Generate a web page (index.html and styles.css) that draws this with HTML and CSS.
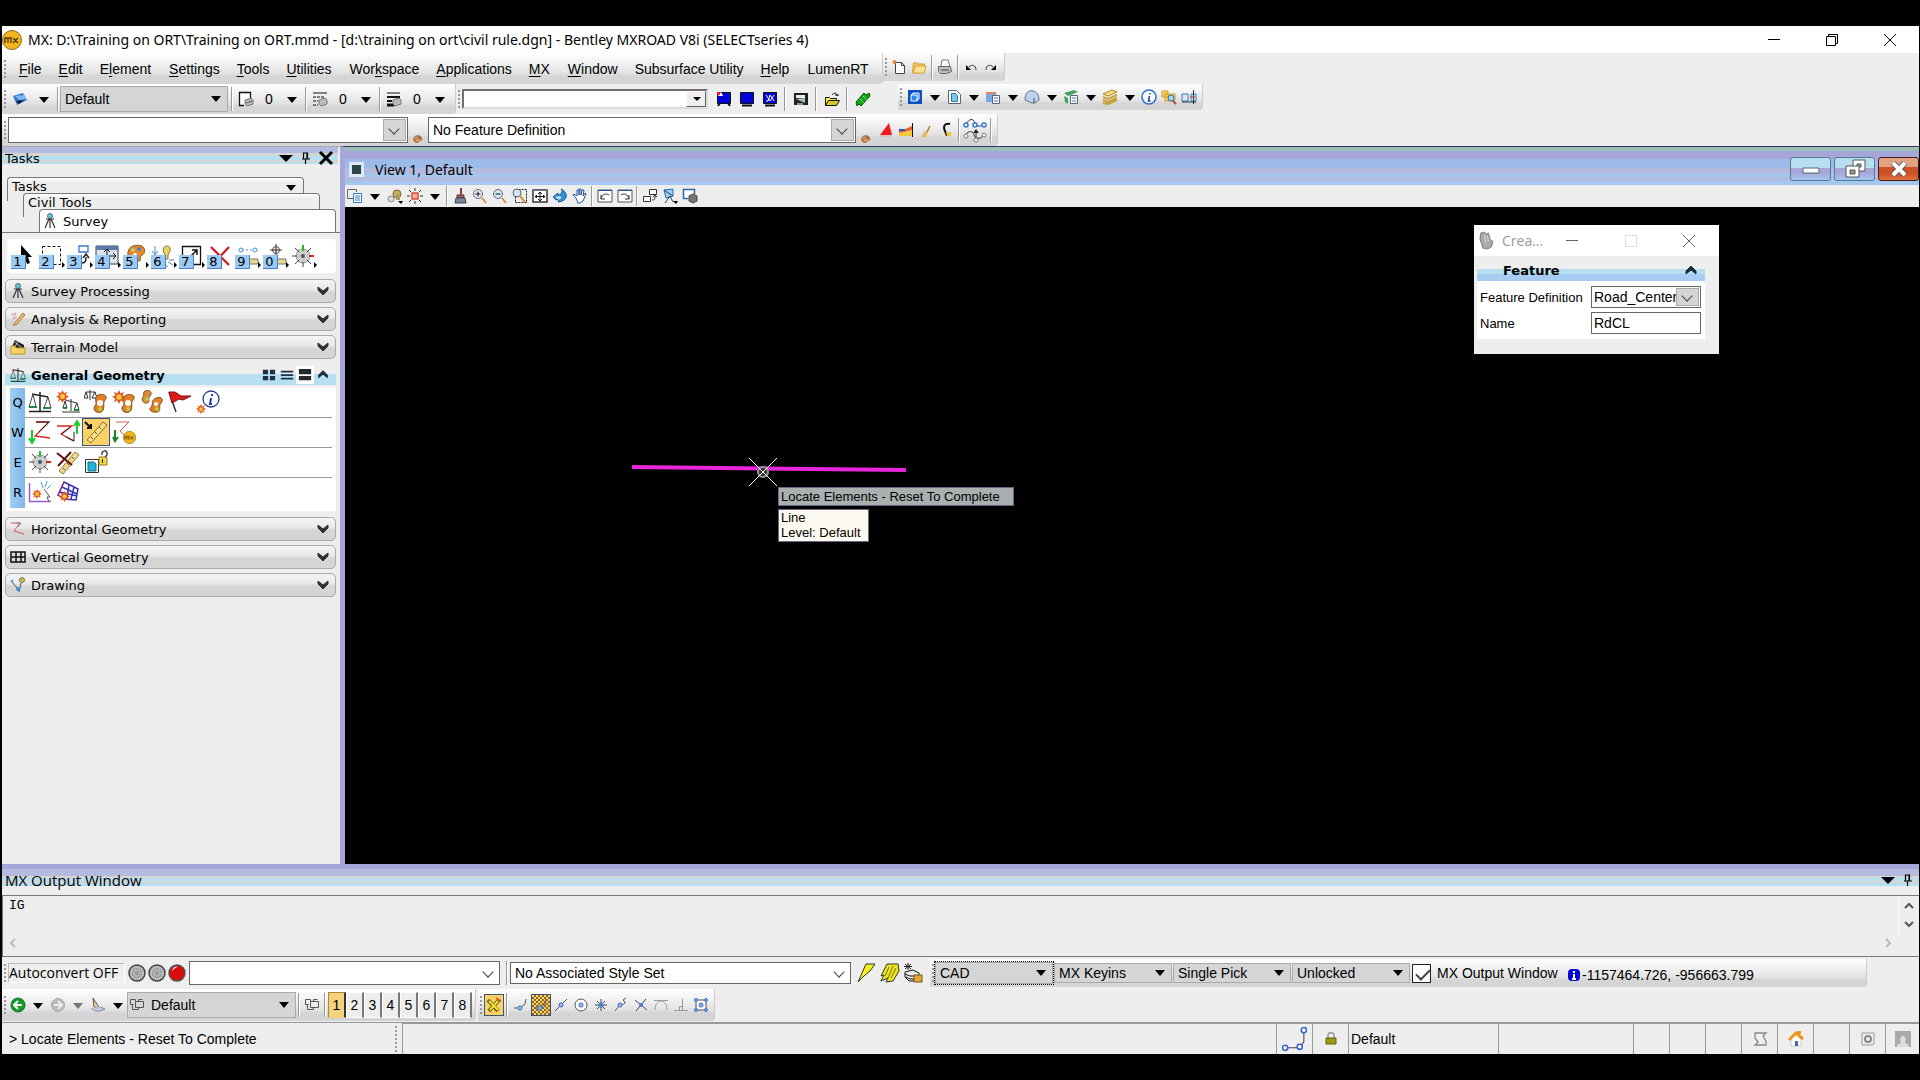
FILE: index.html
```html
<!DOCTYPE html>
<html lang="en">
<head>
  <meta charset="utf-8">
  <title>Bentley MXROAD V8i</title>
  <link rel="stylesheet" href="styles.css">
</head>
<body>
  <!-- icon library -->
  <svg class="library" aria-hidden="true">
    <symbol id="tri" viewBox="0 0 16 16"><path d="M3 6h10l-5 6z" fill="currentColor"/></symbol>
    <symbol id="bigtri" viewBox="0 0 16 16"><path d="M1 5h14l-7 7z" fill="currentColor"/></symbol>
    <symbol id="pin" viewBox="0 0 16 16"><path d="M5.500 9V3h4v6M9 3v6M4 9h8M7.500 9v5" fill="none" stroke="#000" stroke-width="1.200"/></symbol>
    <symbol id="cross" viewBox="0 0 16 16"><path d="M2 2l12 12M14 2L2 14" stroke="#000" stroke-width="3"/></symbol>
    <symbol id="thincross" viewBox="0 0 16 16"><path d="M2 2l12 12M14 2L2 14" stroke="currentColor"/></symbol>
    <symbol id="dash" viewBox="0 0 16 16"><path d="M2 7.500h12" stroke="currentColor"/></symbol>
    <symbol id="box" viewBox="0 0 16 16"><path d="M2.500 2.500h11v11h-11z" fill="none" stroke="currentColor"/></symbol>
    <symbol id="restore" viewBox="0 0 16 16"><path d="M2.500 4.500h9v9h-9zM4.500 4.500v-2h9v9h-2" fill="none" stroke="currentColor"/></symbol>
    <symbol id="down" viewBox="0 0 16 16"><path d="M3 4l5 4 5-4v3l-5 5-5-5z" fill="#333" stroke="#333"/></symbol>
    <symbol id="up" viewBox="0 0 16 16"><path d="M3 11l5-4 5 4V8L8 3 3 8z" fill="#1b2b40" stroke="#1b2b40"/></symbol>
    <symbol id="chev" viewBox="0 0 16 16"><path d="M4 6l4 4 4-4" fill="none" stroke="currentColor" stroke-width="2"/></symbol>
    <symbol id="mx" viewBox="0 0 20 20"><circle cx="10" cy="10" r="9.500" fill="#f3b41c" stroke="#8a6a12"/><path d="M3 13V8h2l1 1v4M6 9l1-1h2v5M11 8l5 5M16 8l-5 5" fill="none" stroke="#4a3905" stroke-width="1.300"/></symbol>
    <symbol id="doc" viewBox="0 0 16 16"><path d="M4.500 3.500h6l3 3v8h-9z" fill="#fff" stroke="#444"/><path d="M10.500 3.500v3h3" fill="none" stroke="#444"/><circle cx="3.500" cy="3" r="2" fill="#e48a3a"/></symbol>
    <symbol id="folder" viewBox="0 0 16 16"><path d="M1.500 14l1-10h4l1 1h6v9z" fill="#f3c258" stroke="#d69d36"/><path d="M2 14l3-7h10l-2 7z" fill="#ffe294" stroke="#dba943"/></symbol>
    <symbol id="print" viewBox="0 0 16 16"><path d="M4 7l1-6h6l2 7" fill="#fff" stroke="#777"/><path d="M1.500 7.500h12l1 5-5 2h-6l-2-2z" fill="#b9bfc2" stroke="#666"/><path d="M4 11h8" stroke="#444"/></symbol>
    <symbol id="undo" viewBox="0 0 16 16"><path d="M6 8c3-3 7-2 7 3" fill="none" stroke="#333"/><path d="M3 6v5h5z"/></symbol>
    <symbol id="redo" viewBox="0 0 16 16"><path d="M10 8C7 5 3 6 3 11" fill="none" stroke="#333"/><path d="M13 6v5H8z"/></symbol>
    <symbol id="attr" viewBox="0 0 16 16"><path d="M1 5l10-3 4 7-10 5z" fill="#2d7ad6"/><path d="M3 5l9-1 2 4-7 1z" fill="#7fb9f2"/><path d="M4 10l8-1-5 4z" fill="#111"/></symbol>
    <symbol id="level" viewBox="0 0 16 16"><path d="M12.500 7V1.500h-11v13H6" fill="#fff" stroke="#111" stroke-width="1.300"/><path d="M7 9l6-2 2 2v4l-6 2-2-2z" fill="#bbb" stroke="#777"/><path d="M8 12l6-2" stroke="#555"/></symbol>
    <symbol id="style" viewBox="0 0 16 16"><path d="M1 2h14" stroke="#111"/><path d="M1 6h12M1 10h5M1 14h5" stroke="#111" stroke-dasharray="3 1"/><path d="M7 9l6-2 2 2v4l-6 2-2-2z" fill="#bbb" stroke="#777"/></symbol>
    <symbol id="weight" viewBox="0 0 16 16"><path d="M1 2h13" stroke="#111"/><path d="M1 6h13M1 10h5" stroke="#111" stroke-width="2"/><path d="M1 14h7" stroke="#111" stroke-width="3"/><path d="M7 9l6-2 2 2v4l-6 2-2-2z" fill="#bbb" stroke="#777"/></symbol>
    <symbol id="screen1" viewBox="0 0 16 16"><path d="M1.500 1.500h13v11h-13z" fill="#0404d8" stroke="#111"/><path d="M4 12l-2 3M12 12l2 3" stroke="#111" stroke-width="2"/><path d="M2 5l3-4 2 4z" fill="#fff"/><path d="M1 1h3v3H1z" fill="#e22"/></symbol>
    <symbol id="screen2" viewBox="0 0 16 16"><path d="M1.500 1.500h13v11h-13z" fill="#0404d8" stroke="#111"/><path d="M3 14.500h10" stroke="#111" stroke-width="2"/></symbol>
    <symbol id="screen3" viewBox="0 0 16 16"><path d="M1.500 1.500h13v11h-13z" fill="#0404d8" stroke="#111"/><path d="M4 4l4 6 4-6M4 10h2l2-6 4 6" fill="none" stroke="#fff"/><path d="M3 14.500h10" stroke="#111" stroke-width="2"/></symbol>
    <symbol id="display" viewBox="0 0 16 16"><path d="M1 2h14v12H1z" fill="#222"/><path d="M3 4h9v3H3z" fill="#e8efef"/><path d="M3 8l9 4V7z" fill="#a5c5b6"/><path d="M4 13h6" stroke="#fff"/></symbol>
    <symbol id="openyellow" viewBox="0 0 16 16"><path d="M1.500 14.500v-8h4l1 1h6v3" fill="#ffef3d" stroke="#111"/><path d="M1.500 14.500l3-5h11l-3 5z" fill="#d9c72d" stroke="#111"/><path d="M8 4c2-3 5-2 5 1M11 4h4" fill="none" stroke="#111"/></symbol>
    <symbol id="tags" viewBox="0 0 16 16"><path d="M1 11l8-9 2 2 3-2 1 3-9 10-2-2-2 2z" fill="#10a818" stroke="#05510a"/><path d="M5 8l4 4M8 5l4 4" stroke="#eee" stroke-dasharray="1 1"/></symbol>
    <symbol id="model" viewBox="0 0 16 16"><path d="M1 1h14v14H1z" fill="#0b4fc4"/><path d="M4 6h6v6H4zM4 6l2-2h6v6l-2 2" fill="#2e83ef" stroke="#fff"/></symbol>
    <symbol id="page" viewBox="0 0 16 16"><path d="M2.500 1.500h8l4 4v9h-12z" fill="#fff" stroke="#567"/><path d="M5.500 4.500h4l2 2v6h-6z" fill="#7cc6e8" stroke="#379"/></symbol>
    <symbol id="refs" viewBox="0 0 16 16"><path d="M1 3h10v10H1z" fill="#7da9dc"/><path d="M1 3h10v2H1z" fill="#d88e55"/><path d="M7.500 6.500h7v8h-7z" fill="#fff" stroke="#567"/><path d="M9 9h4M9 12h4" stroke="#467bc0"/></symbol>
    <symbol id="dome" viewBox="0 0 16 16"><path d="M1 11C1 3 5 1 9 2s6 4 6 9l-4 3H8z" fill="#bed2ef" stroke="#607390"/><path d="M10 9v5" stroke="#444"/></symbol>
    <symbol id="levels2" viewBox="0 0 16 16"><path d="M1 4l10-3 4 2-10 4zM1 7l4 2v6l-3-2z" fill="#43a060"/><path d="M7.500 6.500h7v8h-7z" fill="#fff" stroke="#567"/><path d="M9 9h4M9 12h4" stroke="#467bc0"/></symbol>
    <symbol id="stack" viewBox="0 0 16 16"><path d="M1 5l9-4 5 2-9 4z" fill="#f7db7e" stroke="#a78a2d"/><path d="M1 8l5 2 9-4M1 11l5 2 9-4M1 14l5 1 9-4" fill="none" stroke="#c9a23d" stroke-width="2"/></symbol>
    <symbol id="info" viewBox="0 0 16 16"><circle cx="8" cy="8" r="7" fill="#fff" stroke="#2c6fcb" stroke-width="1.500"/><path d="M9 4v1.500M8.500 7l-1 5h2" stroke="#153f9f" fill="none" stroke-width="1.500"/></symbol>
    <symbol id="find" viewBox="0 0 16 16"><path d="M1 2h6v6H1zM4 5h10v7H4z" fill="#f6ca5b" stroke="#d7a130"/><circle cx="10" cy="9" r="3" fill="#a7d5f2" stroke="#27a"/><path d="M12 12l3 3" stroke="#a53" stroke-width="2"/></symbol>
    <symbol id="draw" viewBox="0 0 16 16"><path d="M1 12V5h6v7zM10 12V5h5v7z" fill="#dde8f2" stroke="#3878b4"/><path d="M12.500 1v14M1 13h14" stroke="#234"/><path d="M9 8h5" stroke="#c33"/></symbol>
    <symbol id="palette" viewBox="0 0 16 16"><path d="M1 10c0-5 5-7 10-5 4 2 4 7 1 7s-2 3-5 3-6-1-6-5z" fill="#db7a28" stroke="#865224"/><circle cx="5" cy="8" r="1.500" fill="#5cc8d8"/><circle cx="10" cy="7" r="1.500" fill="#5164d8"/><path d="M6 12h4" stroke="#fff"/></symbol>
    <symbol id="palettes" viewBox="0 0 24 24"><path d="M5 1c5-2 8 2 5 5s1 6-3 7-6-4-4-6-1-4 2-6z" fill="#dc8b37" stroke="#80501d"/><path d="M16 8c6-2 8 2 5 5s1 8-4 9-9-2-6-5-1-6 5-9z" fill="#e38027" stroke="#80501d"/><circle cx="16" cy="14" r="2" fill="#fff"/><circle cx="7" cy="9" r="2" fill="#b3cc5c"/><circle cx="17" cy="19" r="2" fill="#c0cf3e"/></symbol>
    <symbol id="scalepal" viewBox="0 0 24 24"><path d="M2 2h9M6 0v10M2 2L0 8h4zM11 2L8 8h5z" fill="none" stroke="#333"/><path d="M14 5c7-2 10 2 7 5s1 10-4 12-9-3-6-6-2-8 3-11z" fill="#e38027" stroke="#80501d"/><circle cx="16" cy="13" r="3" fill="#fff"/><circle cx="16" cy="19" r="2" fill="#c0cf3e"/></symbol>
    <symbol id="starpal" viewBox="0 0 24 24"><path d="M14 5c7-2 10 2 7 5s1 10-4 12-9-3-6-6-2-8 3-11z" fill="#e38027" stroke="#80501d"/><circle cx="16" cy="13" r="3" fill="#fff"/><circle cx="16" cy="19" r="2" fill="#c0cf3e"/><use href="#star" width="14" height="14"/></symbol>
    <symbol id="star" viewBox="0 0 16 16"><path d="M8 0l2 4 4-2-2 4 4 2-4 2 2 4-4-2-2 4-2-4-4 2 2-4-4-2 4-2-2-4 4 2z" fill="#e5541e"/><circle cx="8" cy="8" r="3" fill="#ffcf3d"/></symbol>
    <symbol id="redwedge" viewBox="0 0 16 16"><path d="M11 1l3 12H2z" fill="#ee1d1d"/><path d="M2 13h12v2H2z" fill="#d5c8bb"/></symbol>
    <symbol id="wedge" viewBox="0 0 16 16"><path d="M1 8l6-1 7-3v9H1z" fill="#e8632b"/><path d="M1 11l13-3v6H1z" fill="#f4c940"/><path d="M1 8h6" stroke="#2951d4" stroke-width="2"/><path d="M14.500 1v14" stroke="#111"/></symbol>
    <symbol id="brush" viewBox="0 0 16 16"><path d="M12 4l-3 6" stroke="#b5772c" stroke-width="1.500"/><path d="M3 15l4-6 3 1-2 5z" fill="#eab95b"/></symbol>
    <symbol id="hook" viewBox="0 0 16 16"><path d="M12 2C6 1 5 5 7 9l2 5" fill="none" stroke="#111" stroke-width="2"/><path d="M8 10h5v4H9z" fill="#f0c62a"/></symbol>
    <symbol id="network" viewBox="0 0 24 24"><path d="M2 6c5-7 8-7 10-2s6 3 9 1M2 16c4-5 8-4 9 0s6 5 10 0M13 19v-6" fill="none" stroke="#333"/><path d="M10 14l3-4 3 4z" fill="#222"/><g fill="#fff" stroke="#3676d6" stroke-width="1.500"><circle cx="3" cy="6" r="2"/><circle cx="12" cy="6" r="2"/><circle cx="21" cy="6" r="2"/></g><g fill="#fff" stroke="#777"><circle cx="3" cy="17" r="2"/><circle cx="13" cy="21" r="2"/><circle cx="21" cy="16" r="2"/></g></symbol>
    <symbol id="survey" viewBox="0 0 16 16"><circle cx="8" cy="3" r="2.500" fill="#67c6cf" stroke="#478"/><path d="M8 6v9M7 6L3 15M9 6l4 9M4 6h8" fill="none" stroke="#333" stroke-width="1.200"/></symbol>
    <symbol id="pencil" viewBox="0 0 16 16"><path d="M1 4l5-2-3 6 4-2" fill="none" stroke="#d99"/><path d="M3 14L13 2l2 2L6 14z" fill="#e8ba72" stroke="#a87a3a"/></symbol>
    <symbol id="terrain" viewBox="0 0 16 16"><path d="M2 8L5 1l9 5v5z" fill="#222"/><path d="M5 3l7 6M8 2L5 8" stroke="#bbb"/><path d="M1 7h4l1 2h9v6H1z" fill="#f5d263" stroke="#c19628"/></symbol>
    <symbol id="scales" viewBox="0 0 24 24"><path d="M4 4l16 3M12 2v19M1 21.500h22" fill="none" stroke="#222" stroke-width="1.500"/><path d="M5 4L1 17h7zM20 7l-4 11h7z" fill="none" stroke="#444"/><path d="M1 17h8M15 18h8" stroke="#25834b" stroke-width="2"/></symbol>
    <symbol id="starscales" viewBox="0 0 24 24"><path d="M9 10l12 3M15 9v12M6 22h18M9 11l-2 7h4zM21 13l-3 7h5z" fill="none" stroke="#333"/><path d="M7 18h4M18 20h5" stroke="#238343" stroke-width="2"/><use href="#star" width="13" height="13"/></symbol>
    <symbol id="flag" viewBox="0 0 24 24"><path d="M1 2l7 20" stroke="#333" stroke-width="1.500"/><path d="M1 2h6l6 4h10l-8 4-4-1-7 4z" fill="#e21919" stroke="#801010"/></symbol>
    <symbol id="starinfo" viewBox="0 0 24 24"><circle cx="15" cy="9" r="8" fill="#fff" stroke="#27408b" stroke-width="1.300"/><path d="M16 4v2M15 8l-1 6h2" fill="none" stroke="#213baa" stroke-width="2"/><use href="#star" y="14" width="10" height="10"/></symbol>
    <symbol id="zdown" viewBox="0 0 24 24"><path d="M8 2h13L7 16l15 2" fill="none" stroke="#d22" stroke-width="1.300"/><path d="M8 2h13L11 12" fill="none" stroke="#222"/><path d="M4 10v11M1 18l3 5 3-5" fill="none" stroke="#18cc2c" stroke-width="2"/></symbol>
    <symbol id="zup" viewBox="0 0 24 24"><path d="M1 6h15L5 14l13 7" fill="none" stroke="#d22" stroke-width="1.300"/><path d="M14 7L6 14M10 17l8 4v-9" fill="none" stroke="#222"/><path d="M21 14V2M18 6l3-5 3 5" fill="none" stroke="#18cc2c" stroke-width="2"/></symbol>
    <symbol id="ruler" viewBox="0 0 24 24"><path d="M3 20L19 2l4 3L7 23z" fill="#f6df87" stroke="#8a7324"/><path d="M7 17l2 2M11 12l2 2M15 7l2 2" stroke="#555"/><path d="M1 2l6 6M7 4v4H3" fill="none" stroke="#111" stroke-width="2"/></symbol>
    <symbol id="zmx" viewBox="0 0 24 24"><path d="M4 2h13L8 11l4 4" fill="none" stroke="#d55"/><path d="M3 10v10M1 17l2 4 3-4" fill="none" stroke="#16801f" stroke-width="2"/><use href="#mx" x="11" y="11" width="13" height="13"/></symbol>
    <symbol id="target" viewBox="0 0 24 24"><circle cx="12" cy="12" r="7" fill="#ccc" stroke="#999"/><path d="M12 1v5M12 18v5M1 12h5M18 12h5M4 4l4 4M20 4l-4 4M4 20l4-4M20 20l-4-4" stroke="#444"/><path d="M12 1v6" stroke="#1bbb2c" stroke-width="2"/><path d="M18 12h5" stroke="#d22" stroke-width="2"/><circle cx="12" cy="12" r="2" fill="#456"/></symbol>
    <symbol id="rulerx" viewBox="0 0 24 24"><path d="M3 21L19 2l4 3L7 24z" fill="#efd68b" stroke="#9a803a"/><path d="M7 18l2 2M11 13l2 2M16 7l2 2" stroke="#555"/><path d="M1 3l15 12M15 2L2 16" stroke="#611" stroke-width="2"/></symbol>
    <symbol id="unlock" viewBox="0 0 24 24"><path d="M1.500 9.500h13v13h-13z" fill="#fff" stroke="#333"/><path d="M4 12h6l2 2v7H4z" fill="#19b7d8" stroke="#268"/><path d="M15 7h8v8h-8z" fill="#efd94d" stroke="#8d7d20"/><path d="M18 5c-1-5 6-6 5 0l-2 2" fill="none" stroke="#444" stroke-width="1.500"/><path d="M18.500 9v4" stroke="#222"/></symbol>
    <symbol id="chartpick" viewBox="0 0 24 24"><path d="M1.500 3v18.500H23" fill="none" stroke="#9b59d0" stroke-width="1.500"/><path d="M13 2l2 6M19 1l-2 6M23 5l-4 4" stroke="#46a3e0"/><path d="M16 9l6 8h-3l2 5" fill="#fff" stroke="#556"/><use href="#star" x="4" y="9" width="10" height="10"/></symbol>
    <symbol id="mesh" viewBox="0 0 24 24"><path d="M8 2l14 7-2 11-12-1-6-4zM6 7l15 7M4 12l17 4M13 4l-2 15M18 7l-3 12" fill="none" stroke="#3830b8" stroke-width="1.500"/><path d="M8 2L2 16" stroke="#b42d75"/><use href="#star" x="3" y="11" width="11" height="11"/></symbol>
    <symbol id="horiz" viewBox="0 0 16 16"><path d="M1 2h9L4 10l10 3" fill="none" stroke="#d55"/><path d="M6 2h5L8 6" fill="none" stroke="#888"/></symbol>
    <symbol id="gridv" viewBox="0 0 16 16"><path d="M1 3h14v10H1zM1 8h14M6 3v10M11 3v10" fill="#ddd" stroke="#111" stroke-width="1.500"/></symbol>
    <symbol id="drawing" viewBox="0 0 16 16"><path d="M1 4l8 9M11 6l-2 9" fill="none" stroke="#357"/><circle cx="2" cy="4" r="1.500" fill="#6ad"/><circle cx="8" cy="12" r="2" fill="#468bd4"/><circle cx="12" cy="3" r="2.500" fill="#d6bf36" stroke="#777"/></symbol>
    <symbol id="tiles" viewBox="0 0 16 16"><path d="M1 2h6v5H1zM9 2h6v5H9zM1 9h6v5H1zM9 9h6v5H9z" fill="#1d3047"/></symbol>
    <symbol id="lines" viewBox="0 0 16 16"><path d="M1 4h14M1 8h14M1 12h14" stroke="#1d3047" stroke-width="2"/></symbol>
    <symbol id="panels" viewBox="0 0 16 16"><path d="M1 1h14v6H1zM1 9h14v5H1z" fill="#222b2b"/></symbol>
    <symbol id="cursor" viewBox="0 0 24 24"><path d="M10 1v16l4-3 2 6 3-1-2-6h4z" fill="#000"/></symbol>
    <symbol id="fence" viewBox="0 0 24 24"><path d="M3.500 2.500h18v18h-18z" fill="none" stroke="#111" stroke-dasharray="3 2"/></symbol>
    <symbol id="manip" viewBox="0 0 24 24"><path d="M12 2h9v6h-9z" fill="#fff" stroke="#3878cb" stroke-width="1.300"/><path d="M15 19c4 0 4-3 4-6M16 14l3-4 3 4" fill="none" stroke="#222" stroke-width="1.500"/></symbol>
    <symbol id="stretch" viewBox="0 0 24 24"><path d="M1 2h22v18H1z" fill="#dce4ee" stroke="#345"/><path d="M1 2h22v4H1z" fill="#5c7baa"/><path d="M12 5v13M4 12h17M9 8l3-3 3 3M18 9l3 3-3 3" fill="none" stroke="#111"/></symbol>
    <symbol id="colors" viewBox="0 0 24 24"><path d="M5 8c1-6 8-8 14-6 4 3 3 8 0 9s0 6-3 6-2-3-5-3-7-1-6-6z" fill="#e08a2b" stroke="#8d5a1c"/><circle cx="10" cy="6" r="2" fill="#b8cf55"/><circle cx="16" cy="5" r="2" fill="#5875d0"/><circle cx="12" cy="11" r="2" fill="#fff"/></symbol>
    <symbol id="bulb" viewBox="0 0 24 24"><path d="M4 2v8M1 7l3 4 3-4" fill="none" stroke="#478cc8"/><path d="M13 9c-4-8 8-10 6-2l-2 4v4h-3v-4z" fill="#ebd267" stroke="#8f7b28"/><path d="M17 18l5 3M18 16h5M13 20l4 3" stroke="#58a"/></symbol>
    <symbol id="scale" viewBox="0 0 24 24"><path d="M3.500 2.500h18v18h-18z" fill="#fff" stroke="#111" stroke-width="1.300"/><path d="M10 14l8-8M13 6h5v5" fill="none" stroke="#111" stroke-width="1.500"/><path d="M4 12h8v8" fill="none" stroke="#111" stroke-dasharray="2 2"/></symbol>
    <symbol id="delete" viewBox="0 0 24 24"><path d="M4 3l18 18M22 3L8 18" fill="none" stroke="#d81818" stroke-width="2.200"/></symbol>
    <symbol id="measure" viewBox="0 0 24 24"><path d="M7 6h12" stroke="#478bd0" stroke-dasharray="2 2"/><circle cx="6" cy="6" r="2" fill="#fff" stroke="#478bd0"/><circle cx="20" cy="6" r="2" fill="#fff" stroke="#478bd0"/><path d="M13 15h10v5H13z" fill="#ead88a" stroke="#777"/></symbol>
    <symbol id="locate" viewBox="0 0 24 24"><circle cx="13" cy="6" r="3.500" fill="#eee" stroke="#555"/><path d="M13 0v12M7 6h12" stroke="#333"/><path d="M13 15h10v5H13z" fill="#ead88a" stroke="#777"/></symbol>
    <symbol id="vlist" viewBox="0 0 16 16"><path d="M9.500 4V1.500h-9v9H6" fill="none" stroke="#666"/><path d="M6.500 5.500h8v9h-8z" fill="#fff" stroke="#357cc0"/><path d="M8 8h5M8 10h5M8 12h5" stroke="#357cc0"/></symbol>
    <symbol id="vstyle" viewBox="0 0 16 16"><circle cx="10" cy="6" r="4" fill="#c9b25c" stroke="#776629"/><circle cx="4" cy="11" r="3" fill="#ddd" stroke="#888"/><path d="M9 6h4v6H9z" fill="#a49a6c"/><path d="M11 13h5l-2 3z"/></symbol>
    <symbol id="sun" viewBox="0 0 16 16"><path d="M8 0v3M8 13v3M0 8h3M13 8h3M2 2l2 2M14 2l-2 2M2 14l2-2M14 14l-2-2" stroke="#333"/><path d="M5 5h6v6H5z" fill="#ecb2a0" stroke="#d9503a" stroke-width="1.500"/></symbol>
    <symbol id="broom" viewBox="0 0 16 16"><path d="M9 0v7" stroke="#a33" stroke-width="2"/><path d="M5 7h7v3H5z" fill="#b55" stroke="#444"/><path d="M4 10h9l1 5H3z" fill="#789" stroke="#444"/></symbol>
    <symbol id="zin" viewBox="0 0 16 16"><circle cx="6" cy="6" r="4.500" fill="#e9eef3" stroke="#567"/><path d="M3.500 6h5M6 3.500v5" stroke="#111"/><path d="M10 10l4 5" stroke="#d39349" stroke-width="2"/></symbol>
    <symbol id="zout" viewBox="0 0 16 16"><circle cx="6" cy="6" r="4.500" fill="#d5e9f5" stroke="#567"/><path d="M3.500 6h5" stroke="#111"/><path d="M10 10l4 5" stroke="#d39349" stroke-width="2"/></symbol>
    <symbol id="zwin" viewBox="0 0 16 16"><path d="M3.500 1.500h11v13h-11z" fill="none" stroke="#222" stroke-dasharray="2 1"/><circle cx="5" cy="5" r="4" fill="#d5e5f5" stroke="#567"/><path d="M8 8l5 6" stroke="#d39349" stroke-width="2"/></symbol>
    <symbol id="fit" viewBox="0 0 16 16"><path d="M1 2h14v12H1z" fill="#fff" stroke="#333" stroke-width="1.500"/><path d="M1 2.500h14" stroke="#678"/><path d="M8 4v9M3 8.500h10M6 6l2-2 2 2M6 11l2 2 2-2M5 7L3 8.500 5 10M11 7l2 1.500-2 1.500" fill="none" stroke="#111"/></symbol>
    <symbol id="rotate" viewBox="0 0 16 16"><path d="M1 9l5-4v2c4-1 5-4 3-6 7 3 8 12-3 13l1-3-3 1z" fill="#328ed0" stroke="#235a91"/><path d="M3 9l4-1 3 1-3 3z" fill="#b9e1f4"/></symbol>
    <symbol id="hand" viewBox="0 0 16 16"><path d="M4 10L1 7l1-1 3 2V2h2v5-6h2v6l1-5h2l-1 6 2-3 1 1-3 7-3 2H6z" fill="#fff" stroke="#24549b"/></symbol>
    <symbol id="prev" viewBox="0 0 16 16"><path d="M1 2h14v12H1z" fill="#fff" stroke="#555"/><path d="M1 2.500h14" stroke="#258"/><path d="M4 11c1-5 5-6 8-4M4 7v4h4" fill="none" stroke="#333"/></symbol>
    <symbol id="next" viewBox="0 0 16 16"><path d="M1 2h14v12H1z" fill="#fff" stroke="#555"/><path d="M1 2.500h14" stroke="#258"/><path d="M12 11C11 6 7 5 4 7M12 7v4H8" fill="none" stroke="#333"/></symbol>
    <symbol id="copyview" viewBox="0 0 16 16"><path d="M7.500 1.500h7v5h-7zM1.500 8.500h7v5h-7z" fill="#fff" stroke="#333"/><path d="M10 12c3 0 3-1 3-4M11 9l2-2 2 2" fill="none" stroke="#333"/></symbol>
    <symbol id="camera" viewBox="0 0 16 16"><path d="M2 2l9-1v7l-7 2z" fill="#9ccbed" stroke="#2d6bb0"/><path d="M2 2l9 6M8 8l-5 7M8 8l3 6" stroke="#246"/><path d="M11 13h5l-2 3z"/></symbol>
    <symbol id="clip" viewBox="0 0 16 16"><path d="M12.500 6V1.500h-11v9H6" fill="#fff" stroke="#2c66a8" stroke-width="1.500"/><path d="M7 8l4-2 4 2v5l-4 2-4-2z" fill="#777" stroke="#444"/></symbol>
    <symbol id="glove" viewBox="0 0 16 20"><path d="M4 18L1 8l1-6 3-1 3 2 2-1 2 7 3 2-2 6-4 2z" fill="#aaa" stroke="#777"/><path d="M6 4l1 8M9 5l1 6" stroke="#ddd"/></symbol>
    <symbol id="bolt" viewBox="0 0 20 20"><path d="M9 1h9l-5 7-6 5-6 6 4-9z" fill="#f4ef1c" stroke="#333"/></symbol>
    <symbol id="bolts" viewBox="0 0 20 20"><path d="M7 1h11l1 7-6 10-7 1 2-4-7 3 3-6-3 1z" fill="#ede51c" stroke="#333"/><path d="M9 4l-4 9M13 3l-5 12M16 5l-5 10" stroke="#756f14"/></symbol>
    <symbol id="boltdb" viewBox="0 0 20 20"><path d="M2 9l8-2 6 3v8H6l-4-4z" fill="#eee" stroke="#111"/><path d="M2 11l5 2h8M3 14l4 2h7" fill="none" stroke="#111"/><path d="M11 12h8v7h-8z" fill="#e6a431" stroke="#795217"/><path d="M5 0v7M1 3.500h8M2 1l6 5M8 1L2 6" stroke="#222"/></symbol>
    <symbol id="ballgrey" viewBox="0 0 20 20"><circle cx="10" cy="10" r="8" fill="#999" stroke="#444" stroke-width="1.500"/><circle cx="10" cy="10" r="6" fill="none" stroke="#ddd" stroke-dasharray="1 1" stroke-width="2"/><circle cx="10" cy="10" r="3" fill="none" stroke="#ccc" stroke-dasharray="1 1" stroke-width="2"/></symbol>
    <symbol id="ballred" viewBox="0 0 20 20"><circle cx="10" cy="10" r="8" fill="#d90c0c" stroke="#555" stroke-width="1.500"/><path d="M5 8c1-4 3-5 6-4-2 0-4 2-6 4z" fill="#fff"/></symbol>
    <symbol id="back" viewBox="0 0 16 16"><circle cx="8" cy="8" r="7" fill="#149c2a" stroke="#137021"/><path d="M12 8H5M8 4L4 8l4 4" fill="none" stroke="#fff" stroke-width="2"/></symbol>
    <symbol id="forward" viewBox="0 0 16 16"><circle cx="8" cy="8" r="6.500" fill="#bbb" stroke="#aaa"/><path d="M4 8h7M8 4l4 4-4 4" fill="none" stroke="#eee" stroke-width="2"/></symbol>
    <symbol id="plan" viewBox="0 0 16 16"><path d="M3 1l1 9 6 2z" fill="#f1cf85" stroke="#557"/><path d="M1 11c4 4 9 4 14 1l-5-2" fill="#bcd" stroke="#88a"/></symbol>
    <symbol id="views" viewBox="0 0 16 16"><path d="M6.500 4.500v-2h-5v5h3M3.500 7.500v5h6v-2M6.500 4.500h8v6h-8zM9.500 4.500v-2h4" fill="none" stroke="#555"/></symbol>
    <symbol id="snapx" viewBox="0 0 16 16"><path d="M2 3l10 11M13 3L3 14" stroke="#655d12" stroke-width="4"/><path d="M3 4l9 9M12 4L4 13" stroke="#f2e439" stroke-width="2"/><path d="M10 1l5 3" stroke="#c96a22" stroke-width="2"/></symbol>
    <symbol id="near" viewBox="0 0 16 16"><path d="M1 11h6l5-4 1-5" fill="none" stroke="#555"/><circle cx="7" cy="11" r="2" fill="#9bc2f5" stroke="#36b"/></symbol>
    <symbol id="mid" viewBox="0 0 16 16"><path d="M2 14L14 2" stroke="#555"/><circle cx="8" cy="8" r="2" fill="#9bc2f5" stroke="#36b"/></symbol>
    <symbol id="center" viewBox="0 0 16 16"><circle cx="8" cy="8" r="6" fill="#fff" stroke="#555"/><circle cx="8" cy="8" r="2" fill="#9bc2f5" stroke="#36b"/></symbol>
    <symbol id="origin" viewBox="0 0 16 16"><path d="M8 2v12M2 8h12M4 4l8 8M12 4l-8 8" stroke="#444"/><circle cx="8" cy="8" r="2.500" fill="#467fd5"/></symbol>
    <symbol id="bisect" viewBox="0 0 16 16"><path d="M2 14l4-5c2-3 6 0 6-4l-2-2 3-2" fill="none" stroke="#555"/><circle cx="7" cy="8" r="2" fill="#9bc2f5" stroke="#36b"/></symbol>
    <symbol id="inter" viewBox="0 0 16 16"><path d="M2 3l12 10M13 2L3 14" stroke="#444"/><circle cx="8" cy="8" r="2" fill="#467fd5"/></symbol>
    <symbol id="tangent" viewBox="0 0 16 16"><path d="M1 3.500h14M2 13c0-12 12-12 12 0" fill="none" stroke="#999"/></symbol>
    <symbol id="perp" viewBox="0 0 16 16"><path d="M1 13.500h14M9.500 2v12M9 9.500H6.500v4" fill="none" stroke="#999"/></symbol>
    <symbol id="multi" viewBox="0 0 16 16"><path d="M3 3h10v10H3z" fill="#fff" stroke="#446"/><g fill="#9bc2f5" stroke="#36b"><circle cx="3" cy="3" r="1.500"/><circle cx="13" cy="3" r="1.500"/><circle cx="3" cy="13" r="1.500"/><circle cx="13" cy="13" r="1.500"/><circle cx="8" cy="8" r="2"/></g></symbol>
    <symbol id="infodot" viewBox="0 0 16 16"><rect x="2" y="2" width="12" height="12" rx="4" fill="#0404d8"/><path d="M8 4v2M8 7v5M6 12h4" stroke="#fff" stroke-width="2"/></symbol>
    <symbol id="snapmode" viewBox="0 0 24 24"><path d="M3 20h14l4-6V4" fill="none" stroke="#445"/><g fill="#fff" stroke="#36c" stroke-width="1.500"><circle cx="3" cy="20" r="2.500"/><circle cx="17" cy="19" r="2.500"/><circle cx="21" cy="3" r="2.500"/></g></symbol>
    <symbol id="lock" viewBox="0 0 16 16"><path d="M5 7V4c0-3 6-3 6 0v3" fill="none" stroke="#999" stroke-width="1.500"/><path d="M3 7h10v6H3z" fill="#9b9a12" stroke="#65640b"/></symbol>
    <symbol id="scroll" viewBox="0 0 16 16"><path d="M3 2h11l-3 3 3 5v4H3l3-3-3-4z" fill="#eee" stroke="#888" stroke-width="1.300"/></symbol>
    <symbol id="home" viewBox="0 0 16 16"><path d="M3 8v7h10V7L8 3z" fill="#fff" stroke="#ccc"/><path d="M1 9l7-7 7 6M11 3V1h2" fill="none" stroke="#ed961c" stroke-width="3"/><path d="M7 10h3v5H7z" fill="#4b67b5"/></symbol>
    <symbol id="stamp" viewBox="0 0 16 16"><path d="M2 2h12v11l-3 1H2z" fill="#eee" stroke="#999"/><circle cx="8" cy="8" r="3" fill="none" stroke="#888" stroke-width="2"/></symbol>
    <symbol id="user" viewBox="0 0 16 16"><path d="M0 0h16v16H0z" fill="#aaa"/><path d="M2 16c0-4 4-3 4-5-4-8 8-8 4 0 0 2 4 1 4 5z" fill="#ddd"/></symbol>
  </svg>

  <div class="app">
    <header class="titlebar">
      <svg class="logo"><use href="#mx"/></svg>
      <h1>MX: D:\Training on ORT\Training on ORT.mmd - [d:\training on ort\civil rule.dgn] - Bentley MXROAD V8i (SELECTseries 4)</h1>
      <button class="win" aria-label="Minimize"><svg><use href="#dash"/></svg></button>
      <button class="win" aria-label="Restore"><svg><use href="#restore"/></svg></button>
      <button class="win" aria-label="Close"><svg><use href="#thincross"/></svg></button>
    </header>

    <div class="row menurow">
      <nav class="menu strip">
        <i class="grip"></i>
        <a href="#"><u>F</u>ile</a><a href="#"><u>E</u>dit</a><a href="#">E<u>l</u>ement</a><a href="#"><u>S</u>ettings</a><a href="#"><u>T</u>ools</a><a href="#"><u>U</u>tilities</a><a href="#">Wor<u>k</u>space</a><a href="#"><u>A</u>pplications</a><a href="#"><u>M</u>X</a><a href="#"><u>W</u>indow</a><a href="#">Subsurface Utility</a><a href="#"><u>H</u>elp</a><a href="#">LumenRT</a>
      </nav>
      <div class="strip short">
        <i class="grip"></i>
        <button class="tool" aria-label="New"><svg><use href="#doc"/></svg></button>
        <button class="tool" aria-label="Open"><svg><use href="#folder"/></svg></button>
        <i class="sep"></i>
        <button class="tool" aria-label="Print"><svg><use href="#print"/></svg></button>
        <i class="sep"></i>
        <button class="tool" aria-label="Undo"><svg><use href="#undo"/></svg></button>
        <button class="tool" aria-label="Redo"><svg><use href="#redo"/></svg></button>
      </div>
    </div>

    <div class="row">
      <div class="strip attributes">
        <i class="grip"></i>
        <button class="tool" aria-label="Color"><svg><use href="#attr"/></svg></button>
        <button class="tool" aria-label="Color list"><svg><use href="#tri"/></svg></button>
        <i class="sep"></i>
        <span class="drop level"><select aria-label="Active level"><option>Default</option></select></span>
        <i class="sep"></i>
        <button class="tool" aria-label="Element color"><svg><use href="#level"/></svg></button>
        <span class="value">0</span>
        <button class="tool" aria-label="Element color list"><svg><use href="#tri"/></svg></button>
        <i class="sep"></i>
        <button class="tool" aria-label="Line style"><svg><use href="#style"/></svg></button>
        <span class="value">0</span>
        <button class="tool" aria-label="Line style list"><svg><use href="#tri"/></svg></button>
        <i class="sep"></i>
        <button class="tool" aria-label="Line weight"><svg><use href="#weight"/></svg></button>
        <span class="value">0</span>
        <button class="tool" aria-label="Line weight list"><svg><use href="#tri"/></svg></button>
      </div>
      <div class="strip keyin">
        <i class="grip"></i>
        <span class="drop classic"><select aria-label="Key-in"><option></option></select></span>
        <button class="tool" aria-label="Display 1"><svg><use href="#screen1"/></svg></button>
        <button class="tool" aria-label="Display 2"><svg><use href="#screen2"/></svg></button>
        <button class="tool" aria-label="Display 3"><svg><use href="#screen3"/></svg></button>
        <i class="sep"></i>
        <button class="tool" aria-label="Display set"><svg><use href="#display"/></svg></button>
        <i class="sep"></i>
        <button class="tool" aria-label="Open project"><svg><use href="#openyellow"/></svg></button>
        <i class="sep"></i>
        <button class="tool" aria-label="Labels"><svg><use href="#tags"/></svg></button>
      </div>
      <div class="strip short primary">
        <i class="grip"></i>
        <button class="tool" aria-label="Models"><svg><use href="#model"/></svg></button>
        <button class="tool arrow" aria-label="Models list"><svg><use href="#tri"/></svg></button>
        <button class="tool" aria-label="References"><svg><use href="#page"/></svg></button>
        <button class="tool arrow" aria-label="References list"><svg><use href="#tri"/></svg></button>
        <button class="tool" aria-label="Raster manager"><svg><use href="#refs"/></svg></button>
        <button class="tool arrow" aria-label="Raster list"><svg><use href="#tri"/></svg></button>
        <button class="tool" aria-label="Point clouds"><svg><use href="#dome"/></svg></button>
        <button class="tool arrow" aria-label="Point cloud list"><svg><use href="#tri"/></svg></button>
        <button class="tool" aria-label="Level manager"><svg><use href="#levels2"/></svg></button>
        <button class="tool arrow" aria-label="Level manager list"><svg><use href="#tri"/></svg></button>
        <button class="tool" aria-label="Level display"><svg><use href="#stack"/></svg></button>
        <button class="tool arrow" aria-label="Level display list"><svg><use href="#tri"/></svg></button>
        <button class="tool" aria-label="Element information"><svg><use href="#info"/></svg></button>
        <button class="tool" aria-label="Project explorer"><svg><use href="#find"/></svg></button>
        <button class="tool" aria-label="AccuDraw"><svg><use href="#draw"/></svg></button>
      </div>
    </div>

    <div class="row features">
      <div class="strip">
        <i class="grip"></i>
        <span class="drop combo boxed symbology"><select aria-label="Feature symbology"><option></option></select></span>
        <button class="tool low" aria-label="Symbology"><svg><use href="#palette"/></svg></button>
        <span class="drop combo boxed definition"><select aria-label="Feature definition"><option>No Feature Definition</option></select></span>
        <button class="tool low" aria-label="Use palette"><svg><use href="#palette"/></svg></button>
        <button class="tool" aria-label="Profile"><svg><use href="#redwedge"/></svg></button>
        <button class="tool" aria-label="Section"><svg><use href="#wedge"/></svg></button>
        <button class="tool" aria-label="Paint"><svg><use href="#brush"/></svg></button>
        <button class="tool" aria-label="Match"><svg><use href="#hook"/></svg></button>
        <i class="sep"></i>
        <button class="tool huge" aria-label="Chain commands"><svg><use href="#network"/></svg></button>
        <i class="sep"></i>
      </div>
    </div>

    <main class="work">
      <aside class="tasks">
        <div class="panelhead">
          <h2>Tasks</h2>
          <button class="tool" aria-label="Menu"><svg><use href="#bigtri"/></svg></button>
          <button class="tool" aria-label="Pin"><svg><use href="#pin"/></svg></button>
          <button class="tool" aria-label="Close tasks"><svg><use href="#cross"/></svg></button>
        </div>
        <div class="tabs">
          <button class="tab">Tasks <svg><use href="#tri"/></svg></button>
          <button class="tab second">Civil Tools</button>
          <button class="tab third"><svg><use href="#survey"/></svg>Survey</button>
        </div>
        <div class="maintools">
          <button aria-label="Element selection"><svg><use href="#cursor"/></svg><b>1</b></button>
          <button class="more" aria-label="Fence"><svg><use href="#fence"/></svg><b>2</b></button>
          <button class="more" aria-label="Manipulate"><svg><use href="#manip"/></svg><b>3</b></button>
          <button class="more" aria-label="View control"><svg><use href="#stretch"/></svg><b>4</b></button>
          <button class="more" aria-label="Change attributes"><svg><use href="#colors"/></svg><b>5</b></button>
          <button class="more" aria-label="Groups"><svg><use href="#bulb"/></svg><b>6</b></button>
          <button class="more" aria-label="Modify"><svg><use href="#scale"/></svg><b>7</b></button>
          <button aria-label="Delete"><svg><use href="#delete"/></svg><b>8</b></button>
          <button class="more" aria-label="Measure"><svg><use href="#measure"/></svg><b>9</b></button>
          <button class="more" aria-label="Locate"><svg><use href="#locate"/></svg><b>0</b></button>
          <button class="more" aria-label="Civil AccuDraw"><svg><use href="#target"/></svg></button>
        </div>
        <button class="bar"><svg><use href="#survey"/></svg><span>Survey Processing</span><svg><use href="#down"/></svg></button>
        <button class="bar"><svg><use href="#pencil"/></svg><span>Analysis &amp; Reporting</span><svg><use href="#down"/></svg></button>
        <button class="bar"><svg><use href="#terrain"/></svg><span>Terrain Model</span><svg><use href="#down"/></svg></button>
        <section class="open">
          <div class="openhead">
            <svg><use href="#scales"/></svg>
            <h3>General Geometry</h3>
            <button class="tool" aria-label="Icon layout"><svg><use href="#tiles"/></svg></button>
            <button class="tool" aria-label="List layout"><svg><use href="#lines"/></svg></button>
            <button class="tool picked" aria-label="Panel layout"><svg><use href="#panels"/></svg></button>
            <button class="tool" aria-label="Collapse"><svg><use href="#up"/></svg></button>
          </div>
          <div class="palette">
            <div class="line"><kbd>Q</kbd><div>
              <button aria-label="Design standards"><svg><use href="#scales"/></svg></button>
              <button aria-label="Set standard"><svg><use href="#starscales"/></svg></button>
              <button aria-label="Set feature definition"><svg><use href="#scalepal"/></svg></button>
              <button aria-label="Create feature"><svg><use href="#starpal"/></svg></button>
              <button aria-label="Match feature"><svg><use href="#palettes"/></svg></button>
              <button aria-label="Flag"><svg><use href="#flag"/></svg></button>
              <button aria-label="Feature information"><svg><use href="#starinfo"/></svg></button>
            </div></div>
            <div class="line"><kbd>W</kbd><div>
              <button aria-label="Import geometry"><svg><use href="#zdown"/></svg></button>
              <button aria-label="Export geometry"><svg><use href="#zup"/></svg></button>
              <button class="on" aria-label="Create civil rule"><svg><use href="#ruler"/></svg></button>
              <button aria-label="Import MX"><svg><use href="#zmx"/></svg></button>
            </div></div>
            <div class="line"><kbd>E</kbd><div>
              <button aria-label="Civil AccuDraw"><svg><use href="#target"/></svg></button>
              <button aria-label="Remove rule"><svg><use href="#rulerx"/></svg></button>
              <button aria-label="Unlock rule"><svg><use href="#unlock"/></svg></button>
            </div></div>
            <div class="line"><kbd>R</kbd><div>
              <button aria-label="Pick profile"><svg><use href="#chartpick"/></svg></button>
              <button aria-label="Create surface"><svg><use href="#mesh"/></svg></button>
            </div></div>
          </div>
        </section>
        <button class="bar"><svg><use href="#horiz"/></svg><span>Horizontal Geometry</span><svg><use href="#down"/></svg></button>
        <button class="bar"><svg><use href="#gridv"/></svg><span>Vertical Geometry</span><svg><use href="#down"/></svg></button>
        <button class="bar"><svg><use href="#drawing"/></svg><span>Drawing</span><svg><use href="#down"/></svg></button>
      </aside>

      <section class="view">
        <div class="viewhead">
          <i class="viewicon"></i>
          <h2>View 1, Default</h2>
          <button class="glass" aria-label="Minimize view"><svg viewBox="0 0 24 20"><path d="M4 9h16v5H4z" fill="#fff" stroke="#567"/></svg></button>
          <button class="glass" aria-label="Restore view"><svg viewBox="0 0 24 20"><path d="M10 1h12v11H10z" fill="#fff" stroke="#555"/><path d="M14 5h4v3h-4z" fill="#9ab" stroke="#555"/><path d="M3 7h13v11H3z" fill="#fff" stroke="#555"/><path d="M7 11h5v4H7z" fill="#999" stroke="#555"/></svg></button>
          <button class="glass close" aria-label="Close view"><svg viewBox="0 0 24 20"><path d="M6 4l12 12M18 4L6 16" stroke="#555" stroke-width="6"/><path d="M6 4l12 12M18 4L6 16" stroke="#fff" stroke-width="4"/></svg></button>
        </div>
        <div class="viewtools">
          <button class="tool" aria-label="View attributes"><svg><use href="#vlist"/></svg></button>
          <button class="tool" aria-label="View attributes list"><svg><use href="#tri"/></svg></button>
          <button class="tool" aria-label="Display style"><svg><use href="#vstyle"/></svg></button>
          <button class="tool" aria-label="Brightness"><svg><use href="#sun"/></svg></button>
          <button class="tool" aria-label="Brightness list"><svg><use href="#tri"/></svg></button>
          <i class="sep"></i>
          <button class="tool" aria-label="Update view"><svg><use href="#broom"/></svg></button>
          <button class="tool" aria-label="Zoom in"><svg><use href="#zin"/></svg></button>
          <button class="tool" aria-label="Zoom out"><svg><use href="#zout"/></svg></button>
          <button class="tool" aria-label="Window area"><svg><use href="#zwin"/></svg></button>
          <button class="tool" aria-label="Fit view"><svg><use href="#fit"/></svg></button>
          <button class="tool" aria-label="Rotate view"><svg><use href="#rotate"/></svg></button>
          <button class="tool" aria-label="Pan view"><svg><use href="#hand"/></svg></button>
          <i class="sep"></i>
          <button class="tool" aria-label="View previous"><svg><use href="#prev"/></svg></button>
          <button class="tool" aria-label="View next"><svg><use href="#next"/></svg></button>
          <i class="sep"></i>
          <button class="tool" aria-label="Copy view"><svg><use href="#copyview"/></svg></button>
          <button class="tool" aria-label="Camera"><svg><use href="#camera"/></svg></button>
          <button class="tool" aria-label="Clip volume"><svg><use href="#clip"/></svg></button>
        </div>
        <div class="canvas">
          <svg class="element" viewBox="0 0 280 32">
            <path d="M3 12l274 3" stroke="#e824dc" stroke-width="4"/>
            <circle cx="134" cy="17" r="5" fill="#333" stroke="#999" stroke-width="2"/>
            <path d="M120 3l28 28M148 3l-28 28" stroke="#fff"/>
          </svg>
          <div class="prompt">Locate Elements - Reset To Complete</div>
          <div class="hint">Line<br>Level: Default</div>

          <form class="dialog">
            <div class="dialoghead">
              <svg class="glove"><use href="#glove"/></svg>
              <span>Crea...</span>
              <button type="button" class="tool" aria-label="Minimize dialog"><svg><use href="#dash"/></svg></button>
              <button type="button" class="tool faint" aria-label="Maximize dialog"><svg><use href="#box"/></svg></button>
              <button type="button" class="tool" aria-label="Close dialog"><svg><use href="#thincross"/></svg></button>
            </div>
            <div class="group"><h3>Feature</h3><svg><use href="#up"/></svg></div>
            <div class="fields">
              <label for="featdef">Feature Definition</label>
              <span class="drop combo boxed"><select id="featdef"><option>Road_Centerline</option></select></span>
              <label for="featname">Name</label>
              <input id="featname" type="text" value="RdCL">
            </div>
          </form>
        </div>
      </section>
    </main>

    <section class="output">
      <div class="outputhead">
        <h2>MX Output Window</h2>
        <button class="tool" aria-label="Output menu"><svg><use href="#bigtri"/></svg></button>
        <button class="tool" aria-label="Pin output"><svg><use href="#pin"/></svg></button>
      </div>
      <div class="log">
        <pre>IG</pre>
        <div class="vscroll"><svg class="flip"><use href="#chev"/></svg><svg><use href="#chev"/></svg></div>
        <div class="hscroll"><svg class="left"><use href="#chev"/></svg><svg class="right"><use href="#chev"/></svg></div>
      </div>
    </section>

    <div class="row convert">
      <i class="grip"></i>
      <span class="auto">Autoconvert OFF</span>
      <button class="tool big" aria-label="Convert"><svg><use href="#ballgrey"/></svg></button>
      <button class="tool big" aria-label="Convert all"><svg><use href="#ballgrey"/></svg></button>
      <button class="tool big" aria-label="Stop"><svg><use href="#ballred"/></svg></button>
      <span class="drop combo stylename"><select aria-label="Conversion"><option></option></select></span>
      <i class="sep"></i>
      <span class="drop combo styleset"><select aria-label="Style set"><option>No Associated Style Set</option></select></span>
      <span class="bolts">
        <button class="tool big" aria-label="Run style"><svg><use href="#bolt"/></svg></button>
        <button class="tool big" aria-label="Run all styles"><svg><use href="#bolts"/></svg></button>
        <button class="tool big" aria-label="Style setup"><svg><use href="#boltdb"/></svg></button>
      </span>
      <div class="strip mode">
        <i class="grip"></i>
        <span class="drop focus"><select aria-label="Mode"><option>CAD</option></select></span>
        <span class="drop"><select aria-label="Key-ins"><option>MX Keyins</option></select></span>
        <span class="drop"><select aria-label="Pick"><option>Single Pick</option></select></span>
        <span class="drop"><select aria-label="Locking"><option>Unlocked</option></select></span>
        <label class="check"><input type="checkbox" checked>MX Output Window</label>
        <svg class="dot"><use href="#infodot"/></svg>
        <output>-1157464.726, -956663.799</output>
      </div>
    </div>

    <div class="row snaps">
      <div class="strip">
        <i class="grip"></i>
        <button class="tool" aria-label="Back"><svg><use href="#back"/></svg></button>
        <button class="tool" aria-label="Back list"><svg><use href="#tri"/></svg></button>
        <button class="tool" aria-label="Forward"><svg><use href="#forward"/></svg></button>
        <button class="tool grey" aria-label="Forward list"><svg><use href="#tri"/></svg></button>
        <button class="tool" aria-label="Model setup"><svg><use href="#plan"/></svg></button>
        <button class="tool arrow" aria-label="Model setup list"><svg><use href="#tri"/></svg></button>
        <span class="drop viewgroup"><svg><use href="#views"/></svg><select aria-label="View group"><option>Default</option></select></span>
        <i class="sep"></i>
        <button class="tool" aria-label="Manage view groups"><svg><use href="#views"/></svg></button>
        <i class="sep"></i>
        <span class="numbers"><button class="on">1</button><button>2</button><button>3</button><button>4</button><button>5</button><button>6</button><button>7</button><button>8</button></span>
      </div>
      <div class="strip snaplist">
        <i class="grip"></i>
        <button class="tool on" aria-label="AccuSnap"><svg><use href="#snapx"/></svg></button>
        <i class="sep"></i>
        <button class="tool" aria-label="Near snap"><svg><use href="#near"/></svg></button>
        <button class="tool on dots" aria-label="Keypoint snap"><svg><use href="#near"/></svg></button>
        <button class="tool" aria-label="Midpoint snap"><svg><use href="#mid"/></svg></button>
        <button class="tool" aria-label="Center snap"><svg><use href="#center"/></svg></button>
        <button class="tool" aria-label="Origin snap"><svg><use href="#origin"/></svg></button>
        <button class="tool" aria-label="Bisector snap"><svg><use href="#bisect"/></svg></button>
        <button class="tool" aria-label="Intersection snap"><svg><use href="#inter"/></svg></button>
        <button class="tool" aria-label="Tangent snap"><svg><use href="#tangent"/></svg></button>
        <button class="tool" aria-label="Perpendicular snap"><svg><use href="#perp"/></svg></button>
        <button class="tool" aria-label="Multi-snap"><svg><use href="#multi"/></svg></button>
      </div>
    </div>

    <footer class="status">
      <span class="message">&gt; Locate Elements - Reset To Complete</span>
      <i class="grip"></i>
      <span class="cell grow"></span>
      <span class="cell"><svg class="wide"><use href="#snapmode"/></svg></span>
      <span class="cell"><svg><use href="#lock"/></svg></span>
      <span class="cell levelname">Default</span>
      <span class="cell blank"></span>
      <span class="cell"></span>
      <span class="cell"></span>
      <span class="cell"></span>
      <span class="cell"><svg><use href="#scroll"/></svg></span>
      <span class="cell"><svg><use href="#home"/></svg></span>
      <span class="cell"></span>
      <span class="cell"><svg><use href="#stamp"/></svg></span>
      <span class="cell last"><svg><use href="#user"/></svg></span>
    </footer>
  </div>
</body>
</html>
```

FILE: styles.css
```css
* {
  box-sizing: border-box;
}

body {
  margin: 0;
  min-height: 100vh;
  padding: 26px 1px 26px 2px;
  display: flex;
  background: #000;
  color: #000;
  font-family: "Liberation Sans", Arial, sans-serif;
  font-size: 14px;
}

button, select, input {
  font: inherit;
  color: inherit;
}

button {
  border: 0;
  padding: 0;
  background: none;
}

svg {
  display: block;
  flex: none;
  width: 16px;
  height: 16px;
}

h1, h2, h3, pre {
  margin: 0;
  font-weight: normal;
}

.library {
  position: absolute;
  width: 0;
  height: 0;
}

.app {
  flex: 1;
  min-width: 0;
  display: flex;
  flex-direction: column;
  background: #eee;
}

/* title bar */
.titlebar {
  display: flex;
  align-items: center;
  height: 27px;
  background: #fff;
}

.titlebar h1 {
  flex: 1;
  padding-left: 6px;
  font-family: "Noto Sans", sans-serif;
  font-size: 14px;
  white-space: nowrap;
}

.logo {
  width: 20px;
  height: 20px;
}

.win {
  width: 58px;
  height: 27px;
  display: grid;
  place-items: center;
}

/* toolbars */
.row {
  display: flex;
  align-items: flex-start;
  height: 30px;
}

.strip {
  display: flex;
  align-items: center;
  height: 30px;
  padding-right: 3px;
  background: linear-gradient(#fff, #eee 40%, #e2e2e2 65%, #d5d5d5 75%);
  border-right: 1px solid #ccc;
  border-radius: 0 0 4px 0;
}

.strip.short {
  height: 26px;
}

.menurow {
  height: 31px;
}

.menurow .strip {
  height: 31px;
}

.menurow .strip.short {
  height: 28px;
}

.grip {
  flex: none;
  width: 2px;
  height: 18px;
  margin: 0 2px;
  background: repeating-linear-gradient(#999 0 2px, transparent 2px 4px);
}

.sep {
  flex: none;
  width: 2px;
  height: 24px;
  margin: 0 2px;
  background: #fff;
  border-left: 1px solid #999;
}

.tool {
  flex: none;
  display: grid;
  place-items: center;
  width: 20px;
  height: 22px;
}

.tool.arrow {
  width: 19px;
}

.tool.big svg {
  width: 20px;
  height: 20px;
}

.tool.huge {
  width: 26px;
}

.tool.huge svg {
  width: 24px;
  height: 24px;
}

.tool.low {
  align-self: flex-end;
  height: 16px;
}

.tool.low svg {
  width: 10px;
  height: 10px;
}

.tool.grey {
  color: #777;
}

.tool.on {
  border: 1px solid #38547b;
  background: #fbd268;
}

.tool.dots {
  background: repeating-conic-gradient(#8d6a25 0 25%, #fbd268 0 50%) 0 0 / 4px 4px;
}

.menu {
  width: 881px;
  gap: 17px;
}

.menu a {
  color: #000;
  text-decoration: none;
  white-space: nowrap;
}

.menu a:nth-of-type(3n) {
  margin-right: 1px;
}

.menu .grip {
  margin-right: -4px;
}

.menu u {
  text-underline-offset: 2px;
}

.attributes {
  width: 454px;
}

.attributes .tool {
  width: 24px;
}

.attributes .sep {
  margin: 0 1px;
}

.value {
  width: 22px;
  text-align: center;
}

.keyin {
  width: 442px;
  background: none;
  border: 0;
}

.keyin .tool {
  width: 23px;
}

.keyin .sep {
  margin: 0 3px;
}

.keyin .drop {
  margin-right: 4px;
}

.primary .tool:first-of-type {
  margin-left: 1px;
}

/* drop-down lists */
.drop {
  position: relative;
  display: flex;
  align-items: center;
  flex: none;
  width: 118px;
  height: 20px;
  border: 1px solid #aaa;
  background: #d5d5d5;
}

.drop select {
  appearance: none;
  flex: 1;
  min-width: 0;
  height: 100%;
  border: 0;
  border-radius: 0;
  padding: 0 24px 0 4px;
  background: none;
}

.drop::after {
  content: "";
  position: absolute;
  right: 6px;
  top: calc(50% - 3px);
  border: 5px solid transparent;
  border-top: 6px solid #000;
  border-bottom: 0;
  pointer-events: none;
}

.drop.combo {
  background: #fff;
  border-color: #666;
}

.drop.combo::after {
  right: 7px;
  top: calc(50% - 5px);
  width: 7px;
  height: 7px;
  border: solid #444;
  border-width: 0 1px 1px 0;
  transform: rotate(45deg);
}

.drop.boxed::before {
  content: "";
  position: absolute;
  right: 1px;
  top: 1px;
  bottom: 1px;
  width: 21px;
  background: #d5d5d5;
  border: 1px solid #aaa;
}

.drop.level {
  width: 168px;
  height: 26px;
  margin-right: 2px;
}

.drop.classic {
  width: 246px;
  height: 20px;
  background: #fff;
  border: 2px solid;
  border-color: #776f6f #ddd #ddd #776f6f;
}

.drop.classic::before {
  content: "";
  position: absolute;
  right: 0;
  top: 0;
  bottom: 0;
  width: 18px;
  background: #eee;
  border: 1px solid;
  border-color: #fff #666 #666 #fff;
}

.drop.classic::after {
  right: 5px;
  top: calc(50% - 2px);
  border-width: 4px 4px 0;
}

.features .strip {
  height: 32px;
}

.row.features {
  height: 32px;
}

.drop.symbology {
  width: 400px;
  height: 26px;
}

.drop.definition {
  width: 428px;
  height: 26px;
}

.drop.boxed::after {
  right: 9px;
}

/* tasks panel */
.work {
  flex: 1;
  display: flex;
  min-height: 400px;
}

.tasks {
  width: 338px;
  display: flex;
  flex-direction: column;
  padding: 0 4px 0 3px;
  font-family: "DejaVu Sans", Verdana, sans-serif;
  font-size: 13px;
  border-top: 1px solid #aaa;
}

.panelhead {
  display: flex;
  align-items: center;
  height: 22px;
  margin: 0 -2px 0 -3px;
  padding-right: 2px;
  background: linear-gradient(#b3bbdf 0 6px, #d5d5d5 6px 9px, #b6dff0 9px 13px, #d5d5d5 13px 15px, #b6dff0 15px 17px, #eee 17px);
}

.panelhead h2 {
  flex: 1;
  padding-left: 3px;
  font-size: 13px;
}

.tabs {
  display: flex;
  flex-direction: column;
  margin: 8px -4px 6px -3px;
  padding: 0 5px;
  border-bottom: 1px solid #777;
}

.tab {
  display: flex;
  align-items: center;
  width: 297px;
  height: 24px;
  padding: 0 4px 6px;
  border: 1px solid #777;
  border-bottom: 0;
  border-radius: 4px 4px 0 0;
  background: linear-gradient(#fff, #eee 4px);
}

.tab svg {
  margin-left: auto;
}

.tab.second {
  margin: -8px 0 0 16px;
}

.tab.third {
  margin: -8px 0 0 32px;
  height: 23px;
  padding: 0 2px;
  background: #fff;
}

.tab.third svg {
  margin: 0 5px 0 0;
}

.maintools {
  display: flex;
  height: 34px;
  margin: 0 0 6px 2px;
  padding: 4px;
  background: #fff;
  border-radius: 4px;
}

.maintools button {
  position: relative;
  width: 28px;
  height: 26px;
}

.maintools svg {
  width: 24px;
  height: 24px;
}

.maintools b {
  position: absolute;
  left: 0;
  bottom: 0;
  width: 15px;
  height: 14px;
  padding-right: 1px;
  background: #9dcaf5;
  border-bottom: 1px solid #4c7fc0;
  border-right: 1px solid #4c7fc0;
  font-weight: normal;
  font-size: 13px;
  line-height: 14px;
}

.maintools .more::after {
  content: "";
  position: absolute;
  right: 2px;
  bottom: 1px;
  border: 3px solid transparent;
  border-left-color: #000;
  border-right: 0;
}

.bar {
  display: flex;
  align-items: center;
  flex: none;
  height: 24px;
  margin-bottom: 4px;
  padding: 0 4px;
  border: 1px solid #aaa;
  border-radius: 5px;
  background: linear-gradient(#f4f4f4, #e8e8e8 45%, #d5d5d5 55%);
  text-align: left;
}

.bar span {
  flex: 1;
  padding-left: 5px;
}

.openhead {
  display: flex;
  align-items: center;
  height: 24px;
  padding: 0 4px 0 5px;
  background: linear-gradient(#eee 0 11px, #b6dff0 11px 22px, #eee 22px);
}

.openhead h3 {
  flex: 1;
  padding-left: 5px;
  font-size: 13px;
  font-weight: bold;
}

.openhead .tool {
  width: 18px;
  height: 18px;
}

.openhead .tool svg {
  width: 14px;
  height: 14px;
}

.picked {
  background: #fff;
}

.palette {
  margin: 0 0 6px 1px;
  padding: 1px 4px 3px;
  background: #fff;
}

.line {
  display: flex;
  height: 30px;
}

.line kbd {
  width: 15px;
  background: linear-gradient(90deg, #9ccff5, #83b7e8);
  font: inherit;
  line-height: 30px;
  text-align: center;
}

.line div {
  flex: 1;
  display: flex;
  padding-left: 1px;
  border-bottom: 1px solid #999;
}

.line:last-child div {
  border: 0;
}

.line button {
  width: 28px;
  height: 28px;
  display: grid;
  place-items: center;
}

.line svg {
  width: 24px;
  height: 24px;
}

.line .on {
  border: 1px solid #38547b;
  background: #fbd268;
}

/* drawing view */
.view {
  flex: 1;
  min-width: 0;
  display: flex;
  flex-direction: column;
  border-left: 5px solid #a6a6d8;
  border-top: 1px solid #34345f;
}

.viewhead {
  display: flex;
  align-items: center;
  gap: 3px;
  height: 38px;
  padding-top: 6px;
  background: linear-gradient(#9cc0b8 0 4px, #a6a6d8 4px 12px, #9dbbe8 12px 21px, #b3bbdf 21px 27px, #a3c8ef 27px 30px, #b3bbdf 30px 34px, #a3c8ef 34px);
}

.viewicon {
  width: 15px;
  height: 15px;
  margin-left: 4px;
  border: 3px solid #dde9f3;
  background: #2c4646;
}

.viewhead h2 {
  flex: 1;
  padding-left: 8px;
  font-family: "Noto Sans", sans-serif;
  font-size: 14px;
}

.glass {
  width: 41px;
  height: 24px;
  display: grid;
  place-items: center;
  border: 1px solid #547994;
  border-radius: 3px;
  background: linear-gradient(#b6dff0 45%, #a6a6d8 45% 65%, #a3c8ef);
}

.glass svg {
  width: 24px;
  height: 20px;
}

.glass.close {
  background: linear-gradient(#e2a284 40%, #cb5226 40% 70%, #df7242);
  border-color: #471a1a;
}

.viewtools {
  display: flex;
  align-items: center;
  height: 22px;
  background: #eee;
}

.viewtools .sep {
  height: 20px;
  margin: 0 2px 0 1px;
}

.canvas {
  position: relative;
  flex: 1;
  background: #000;
}

.element {
  position: absolute;
  left: 284px;
  top: 248px;
  width: 280px;
  height: 32px;
}

.prompt, .hint {
  position: absolute;
  left: 433px;
  padding: 0 2px;
  border: 1px solid #668;
  white-space: nowrap;
}

.prompt {
  top: 280px;
  width: 236px;
  height: 19px;
  line-height: 17px;
  font-size: 13px;
  background: #aab0b0;
}

.hint {
  top: 302px;
  width: 91px;
  background: #fffaf0;
  font-size: 13px;
  line-height: 15px;
  padding-bottom: 1px;
}

.dialog {
  position: absolute;
  right: 200px;
  top: 18px;
  width: 245px;
  height: 129px;
  background: #eee;
}

.dialoghead {
  display: flex;
  align-items: center;
  height: 31px;
  padding-right: 20px;
  background: #fff;
  color: #666;
  font-family: "Open Sans", sans-serif;
}

.dialoghead .glove {
  width: 15px;
  height: 19px;
  margin: 0 8px 0 5px;
}

.dialoghead span {
  width: 60px;
  color: #999;
}

.dialoghead .tool + .tool {
  margin-left: auto;
}

.dialoghead .faint {
  color: #ddd;
}

.group {
  display: flex;
  align-items: center;
  height: 25px;
  margin: 0 14px 0 3px;
  padding: 4px 6px 0 26px;
  background: linear-gradient(#eee 0 13px, #b6dff0 13px 18px, #a6ccf1 18px);
}

.group h3 {
  flex: 1;
  font-family: "DejaVu Sans", Verdana, sans-serif;
  font-size: 13px;
  font-weight: bold;
}

.fields {
  display: grid;
  grid-template-columns: 1fr 110px;
  gap: 4px;
  align-items: center;
  margin: 0 14px 0 3px;
  padding: 5px 4px 5px 3px;
  background: #fff;
  font-size: 13px;
}

.fields .drop {
  width: 110px;
  height: 22px;
}

.fields select {
  padding: 0 20px 0 2px;
}

.fields input {
  width: 110px;
  height: 22px;
  padding: 0 2px;
  border: 1px solid #666;
}

.fields .drop, .fields input {
  font-size: 14px;
}

/* output window */
.outputhead {
  display: flex;
  align-items: center;
  height: 31px;
  padding-right: 1px;
  background: linear-gradient(#a6a6d8 0 5px, #b3bbdf 5px 12px, #d5d5d5 12px 14px, #b6dff0 14px 17px, #d5d5d5 17px 19px, #b6dff0 19px 22px, #eee 22px);
}

.outputhead h2 {
  flex: 1;
  padding: 1px 0 0 3px;
  font-family: "Open Sans", sans-serif;
  font-size: 15px;
}

.log {
  display: grid;
  grid-template-columns: 1fr 21px;
  grid-template-rows: 38px 22px;
  border: 1px solid #777;
  border-width: 1px 0 1px 1px;
}

.log pre {
  padding: 2px 6px;
  font-family: "Liberation Mono", monospace;
  font-size: 13px;
}

.vscroll {
  display: flex;
  flex-direction: column;
  justify-content: space-between;
  padding: 2px;
  color: #555;
  border-left: 1px solid #fff;
}

.hscroll {
  display: flex;
  justify-content: space-between;
  align-items: flex-start;
  padding: 1px 2px;
  color: #bbb;
}

.flip {
  transform: rotate(180deg);
}

.left {
  transform: rotate(90deg);
}

.right {
  transform: rotate(-90deg);
}

/* bottom toolbars */
.row.convert {
  align-items: center;
  height: 32px;
  white-space: nowrap;
}

.auto {
  width: 117px;
  height: 20px;
  border: 1px solid #bbb;
  border-right-color: #fff;
  border-bottom-color: #fff;
  font-family: "Open Sans", sans-serif;
  line-height: 18px;
  margin-right: 2px;
}

.stylename {
  width: 311px;
  height: 24px;
  margin: 0 4px 0 2px;
}

.styleset {
  width: 341px;
  height: 22px;
}

.bolts {
  display: flex;
  gap: 3px;
  margin: 0 7px 0 6px;
}

.mode {
  width: 937px;
  height: 28px;
}

.mode .grip {
  margin-right: 1px;
}

.mode .drop + .drop {
  margin-left: 1px;
}

.drop.focus {
  height: 22px;
  outline: 1px dotted #000;
}

.check {
  display: flex;
  align-items: center;
  width: 154px;
  margin-left: 2px;
}

.check input {
  appearance: none;
  position: relative;
  width: 19px;
  height: 19px;
  margin: 0 6px 0 0;
  border: 1px solid #222;
  background: #fff;
}

.check input:checked::after {
  content: "";
  position: absolute;
  left: 6px;
  top: 1px;
  width: 6px;
  height: 12px;
  border: solid #444;
  border-width: 0 2px 2px 0;
  transform: rotate(45deg);
}

.mode .dot {
  margin-top: 4px;
}

.mode output {
  padding-top: 4px;
}

.snaps .strip {
  height: 32px;
}

.row.snaps {
  height: 33px;
}

.snaplist {
  margin-left: 2px;
}

.snaplist .sep {
  margin-right: 3px;
}

.viewgroup {
  width: 169px;
  height: 26px;
  padding-left: 1px;
}

.viewgroup select {
  padding-left: 6px;
}

.numbers {
  display: flex;
}

.numbers button {
  width: 18px;
  height: 26px;
  background: #eee;
  border: 1px solid #fff;
  border-right: 2px solid #777;
}

.numbers .on {
  background: #f4d27b;
  border-color: #a8884a #333 #f4d27b #a8884a;
}

/* status bar */
.status {
  display: flex;
  align-items: center;
  height: 32px;
  border-top: 1px solid #999;
}

.status .message {
  width: 391px;
  padding-left: 7px;
}

.status .grip {
  height: 26px;
}

.cell {
  flex: none;
  width: 36px;
  height: 31px;
  display: flex;
  align-items: center;
  justify-content: center;
  border: solid #999;
  border-width: 1px 0 0 1px;
}

.cell .wide {
  width: 25px;
  height: 25px;
}

.cell.grow {
  flex: 1;
  margin-left: 3px;
}

.cell.levelname {
  width: 150px;
  justify-content: flex-start;
  padding-left: 2px;
}

.cell.blank {
  width: 135px;
}

.cell.last {
  width: 34px;
}
```
